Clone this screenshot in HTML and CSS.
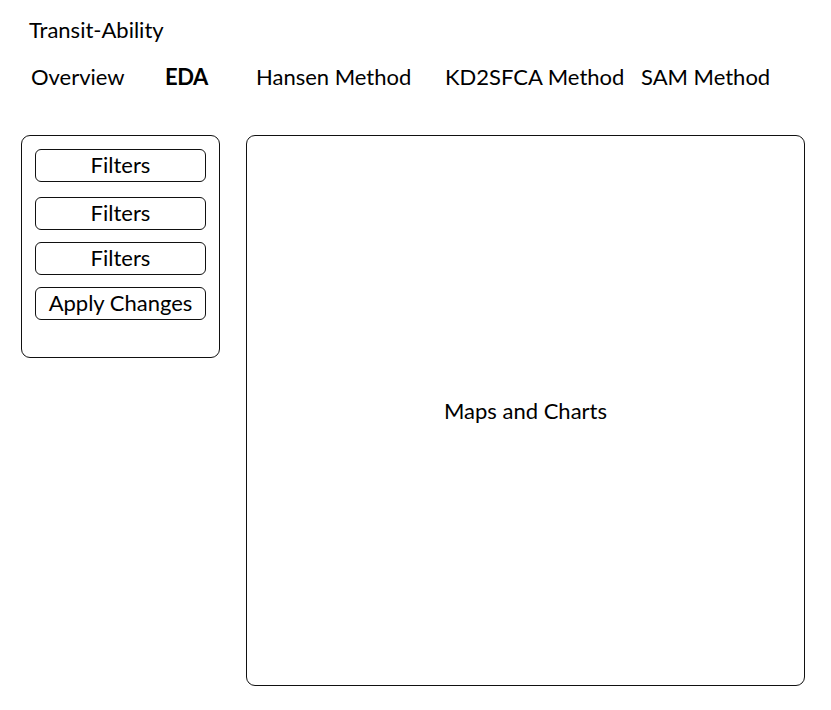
FILE: index.html
```html
<!DOCTYPE html>
<html>
<head>
<meta charset="utf-8">
<link rel="stylesheet" href="styles.css">
</head>
<body>
<header class="header">
  <div class="brand">Transit-Ability</div>
  <nav class="nav">
    <span class="nav-item">Overview</span>
    <span class="nav-item active">EDA</span>
    <span class="nav-item">Hansen Method</span>
    <span class="nav-item">KD2SFCA Method</span>
    <span class="nav-item">SAM Method</span>
  </nav>
</header>
<main class="content">
  <aside class="sidebar">
    <button class="btn">Filters</button>
    <button class="btn">Filters</button>
    <button class="btn">Filters</button>
    <button class="btn">Apply Changes</button>
  </aside>
  <section class="canvas">Maps and Charts</section>
</main>
</body>
</html>
```
FILE: styles.css
```css
* { box-sizing: border-box; }
html, body { margin: 0; padding: 0; background: #fff; }
body {
  font-family: Lato, "Open Sans", sans-serif;
  font-size: 22px;
  color: #000;
}
.header { padding: 17px 0 0 29px; }
.brand { line-height: 26px; }
.nav {
  display: grid;
  grid-template-columns: 134px 91px 189px 196px auto;
  margin-top: 21px;
  padding-left: 2px;
  line-height: 26px;
}
.active { font-weight: 700; letter-spacing: -0.5px; }
.content {
  display: flex;
  align-items: flex-start;
  gap: 26px;
  padding: 45px 0 0 21px;
}
.sidebar {
  width: 199px;
  height: 223px;
  border: 1px solid #111;
  border-radius: 9px;
  padding: 13px 13px 0 13px;
  display: flex;
  flex-direction: column;
}
.btn {
  font: inherit;
  color: #000;
  background: #fff;
  border: 1px solid #111;
  border-radius: 6px;
  height: 33px;
  padding: 0 0 2px 0;
  line-height: 29px;
  margin-bottom: 12px;
}
.btn:nth-child(1) { margin-bottom: 15px; }
.canvas {
  width: 559px;
  height: 551px;
  border: 1px solid #111;
  border-radius: 9px;
  display: flex;
  align-items: center;
  justify-content: center;
}
```
